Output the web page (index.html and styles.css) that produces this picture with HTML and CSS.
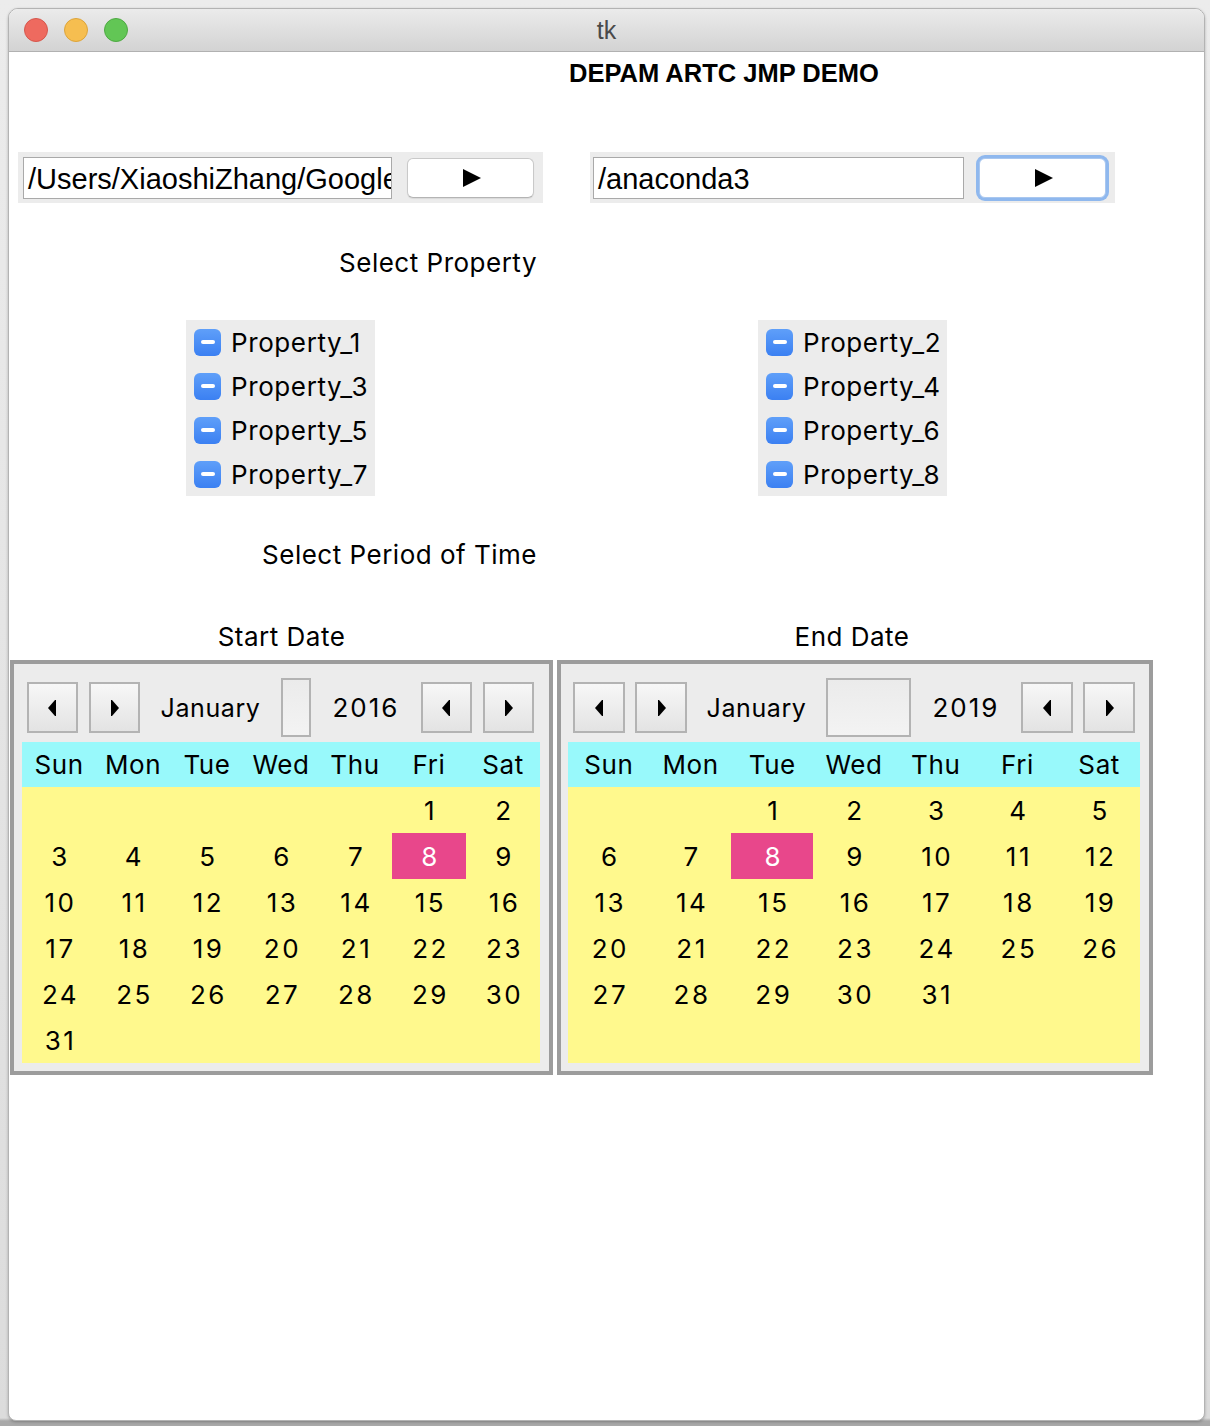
FILE: index.html
```html
<!DOCTYPE html>
<html>
<head>
<meta charset="utf-8">
<title>tk</title>
<link rel="stylesheet" href="styles.css">
</head>
<body>
<div class="desktop">
  <div class="window">
    <div class="titlebar">
      <div class="lights">
        <span class="light red"></span>
        <span class="light yellow"></span>
        <span class="light green"></span>
      </div>
      <div class="wtitle">tk</div>
      <div></div>
    </div>
    <div class="content">
      <div class="row title-row">
        <div></div>
        <div class="app-title">DEPAM ARTC JMP DEMO</div>
      </div>

      <div class="row entries-row">
        <div class="entry-frame left-frame">
          <div class="entry entry-left">/Users/XiaoshiZhang/Google Drive</div>
          <div class="play-btn"><svg width="18" height="18" viewBox="0 0 18 18"><polygon points="0,0 18,9 0,18" fill="#000"/></svg></div>
        </div>
        <div class="entry-frame right-frame">
          <div class="entry entry-right">/anaconda3</div>
          <div class="play-btn focused"><svg width="18" height="18" viewBox="0 0 18 18"><polygon points="0,0 18,9 0,18" fill="#000"/></svg></div>
        </div>
      </div>

      <div class="row label-row prop-label-row">
        <div class="label-right">Select Property</div>
        <div></div>
      </div>

      <div class="row checks-row">
        <div class="check-group group-left">
          <div class="check-item"><span class="cbox"><span class="dash"></span></span><span>Property_1</span></div>
          <div class="check-item"><span class="cbox"><span class="dash"></span></span><span>Property_3</span></div>
          <div class="check-item"><span class="cbox"><span class="dash"></span></span><span>Property_5</span></div>
          <div class="check-item"><span class="cbox"><span class="dash"></span></span><span>Property_7</span></div>
        </div>
        <div class="check-group group-right">
          <div class="check-item"><span class="cbox"><span class="dash"></span></span><span>Property_2</span></div>
          <div class="check-item"><span class="cbox"><span class="dash"></span></span><span>Property_4</span></div>
          <div class="check-item"><span class="cbox"><span class="dash"></span></span><span>Property_6</span></div>
          <div class="check-item"><span class="cbox"><span class="dash"></span></span><span>Property_8</span></div>
        </div>
      </div>

      <div class="row label-row period-label-row">
        <div class="label-right">Select Period of Time</div>
        <div></div>
      </div>

      <div class="row label-row dates-label-row">
        <div class="label-center">Start Date</div>
        <div class="label-center end-label">End Date</div>
      </div>

      <div class="row cal-row">
        <div class="calendar cal-left">
          <div class="cal-head">
            <div class="nav-btn"><svg width="9" height="18" viewBox="0 0 9 18"><polygon points="0,9 7,1 8,1 8,17 7,17" fill="#000"/></svg></div>
            <div class="nav-btn"><svg width="9" height="18" viewBox="0 0 9 18"><polygon points="9,9 2,1 1,1 1,17 2,17" fill="#000"/></svg></div>
            <div class="month-label">January</div>
            <div class="spacer-box"></div>
            <div class="year-label">2016</div>
            <div class="nav-btn"><svg width="9" height="18" viewBox="0 0 9 18"><polygon points="0,9 7,1 8,1 8,17 7,17" fill="#000"/></svg></div>
            <div class="nav-btn"><svg width="9" height="18" viewBox="0 0 9 18"><polygon points="9,9 2,1 1,1 1,17 2,17" fill="#000"/></svg></div>
          </div>
          <div class="day-names">
            <span>Sun</span><span>Mon</span><span>Tue</span><span>Wed</span><span>Thu</span><span>Fri</span><span>Sat</span>
          </div>
          <div class="days">
            <span></span><span></span><span></span><span></span><span></span><span>1</span><span>2</span>
            <span>3</span><span>4</span><span>5</span><span>6</span><span>7</span><span class="sel">8</span><span>9</span>
            <span>10</span><span>11</span><span>12</span><span>13</span><span>14</span><span>15</span><span>16</span>
            <span>17</span><span>18</span><span>19</span><span>20</span><span>21</span><span>22</span><span>23</span>
            <span>24</span><span>25</span><span>26</span><span>27</span><span>28</span><span>29</span><span>30</span>
            <span>31</span><span></span><span></span><span></span><span></span><span></span><span></span>
          </div>
        </div>

        <div class="calendar cal-right">
          <div class="cal-head">
            <div class="nav-btn"><svg width="9" height="18" viewBox="0 0 9 18"><polygon points="0,9 7,1 8,1 8,17 7,17" fill="#000"/></svg></div>
            <div class="nav-btn"><svg width="9" height="18" viewBox="0 0 9 18"><polygon points="9,9 2,1 1,1 1,17 2,17" fill="#000"/></svg></div>
            <div class="month-label">January</div>
            <div class="spacer-box"></div>
            <div class="year-label">2019</div>
            <div class="nav-btn"><svg width="9" height="18" viewBox="0 0 9 18"><polygon points="0,9 7,1 8,1 8,17 7,17" fill="#000"/></svg></div>
            <div class="nav-btn"><svg width="9" height="18" viewBox="0 0 9 18"><polygon points="9,9 2,1 1,1 1,17 2,17" fill="#000"/></svg></div>
          </div>
          <div class="day-names">
            <span>Sun</span><span>Mon</span><span>Tue</span><span>Wed</span><span>Thu</span><span>Fri</span><span>Sat</span>
          </div>
          <div class="days">
            <span></span><span></span><span>1</span><span>2</span><span>3</span><span>4</span><span>5</span>
            <span>6</span><span>7</span><span class="sel">8</span><span>9</span><span>10</span><span>11</span><span>12</span>
            <span>13</span><span>14</span><span>15</span><span>16</span><span>17</span><span>18</span><span>19</span>
            <span>20</span><span>21</span><span>22</span><span>23</span><span>24</span><span>25</span><span>26</span>
            <span>27</span><span>28</span><span>29</span><span>30</span><span>31</span><span></span><span></span>
            <span></span><span></span><span></span><span></span><span></span><span></span><span></span>
          </div>
        </div>
      </div>
    </div>
  </div>
</div>
</body>
</html>
```
FILE: styles.css
```css
html, body {
  margin: 0;
  padding: 0;
}
body {
  width: 1210px;
  height: 1426px;
  overflow: hidden;
  background: linear-gradient(to bottom, #ececec 0, #dcdcdc 1418px, #a9a9a9 1421px, #a9a9a9 100%);
  font-family: Inter, "Noto Sans", sans-serif;
  color: #000;
}
.desktop {
  padding: 8px 0 0 8px;
}
.window {
  box-sizing: border-box;
  width: 1197px;
  height: 1413px;
  border: 1px solid #b3b3b3;
  border-radius: 10px 10px 8px 8px;
  background: #fff;
  overflow: hidden;
  box-shadow: 0 1px 3px rgba(0,0,0,0.25);
}
.titlebar {
  box-sizing: border-box;
  height: 43px;
  border-bottom: 1px solid #b1b1b1;
  background: linear-gradient(to bottom, #ebebeb, #d3d3d3);
  display: grid;
  grid-template-columns: 1fr auto 1fr;
  align-items: center;
}
.lights {
  display: flex;
  gap: 16px;
  padding-left: 15px;
}
.light {
  box-sizing: border-box;
  width: 24px;
  height: 24px;
  border-radius: 50%;
  display: block;
}
.red { background: #ee6a5f; border: 1px solid #d5574d; }
.yellow { background: #f6be50; border: 1px solid #dca43b; }
.green { background: #62c655; border: 1px solid #4ea943; }
.wtitle {
  font-family: "Liberation Sans", Arial, sans-serif;
  font-size: 25px;
  color: #4a4a4a;
  line-height: 30px;
}

.content {
  padding-left: 1px;
}
.row {
  display: grid;
  grid-template-columns: 543px 596px;
  column-gap: 4px;
}
.title-row {
  padding-top: 6px;
}
.app-title {
  font-family: "Liberation Sans", Arial, sans-serif;
  font-weight: bold;
  font-size: 25.5px;
  line-height: 30px;
  padding-left: 12px;
}
.entries-row {
  margin-top: 64px;
}
.entry-frame {
  box-sizing: border-box;
  width: 525px;
  height: 51px;
  background: #ececec;
  display: flex;
  align-items: center;
  gap: 15px;
  padding-right: 9px;
}
.left-frame {
  margin-left: 8px;
  padding-left: 5px;
}
.right-frame {
  margin-left: 33px;
  padding-left: 3px;
}
.entry {
  box-sizing: border-box;
  height: 42px;
  border: 1px solid #a9a9a9;
  background: #fff;
  font-family: "Liberation Sans", Arial, sans-serif;
  font-size: 29px;
  line-height: 38px;
  padding-top: 2px;
  padding-left: 4px;
  white-space: nowrap;
  overflow: hidden;
}
.entry-left { width: 369px; }
.entry-right { width: 371px; }
.play-btn {
  box-sizing: border-box;
  width: 127px;
  height: 40px;
  background: #fff;
  border: 1px solid #c9c9c9;
  border-bottom-color: #b4b4b4;
  border-radius: 6px;
  display: flex;
  align-items: center;
  justify-content: center;
  box-shadow: 0 1px 1px rgba(0,0,0,0.08);
}
.play-btn svg {
  margin-left: 3px;
}
.play-btn.focused {
  border-color: #a9c7ef;
  box-shadow: 0 0 0 3px #8fb8ee;
}

.label-row {
  font-size: 26px;
  line-height: 30px;
  letter-spacing: 0.5px;
}
.prop-label-row { margin-top: 45px; }
.label-right {
  text-align: right;
  padding-right: 16px;
}
.label-center {
  text-align: center;
}
.end-label {
  padding-right: 6px;
}
.checks-row {
  margin-top: 42px;
}
.check-group {
  box-sizing: border-box;
  width: 189px;
  background: #ececec;
  padding-left: 8px;
}
.group-left { margin-left: 176px; }
.group-right { margin-left: 201px; }
.check-item {
  height: 44px;
  display: flex;
  align-items: center;
  gap: 10px;
  font-size: 26px;
  letter-spacing: 0.6px;
}
.cbox {
  box-sizing: border-box;
  width: 27px;
  height: 27px;
  border-radius: 6px;
  background: linear-gradient(to bottom, #5f9ff9, #3b80f2);
  display: flex;
  align-items: center;
  justify-content: center;
  flex: none;
}
.dash {
  width: 14px;
  height: 4px;
  border-radius: 2px;
  background: #fff;
  display: block;
}
.period-label-row { margin-top: 44px; }
.dates-label-row { margin-top: 52px; }

.cal-row {
  margin-top: 8px;
}
.calendar {
  box-sizing: border-box;
  height: 415px;
  border: 4px solid #9c9c9c;
  background: #ececec;
  padding-top: 14px;
}
.cal-left {
  padding-left: 8px;
  padding-right: 9px;
}
.cal-right {
  padding-left: 7px;
  padding-right: 9px;
}
.cal-head {
  height: 59px;
  display: flex;
  align-items: center;
  font-size: 25px;
  letter-spacing: 0.6px;
}
.cal-left .cal-head { padding-left: 5px; }
.cal-right .cal-head { padding-left: 5px; }
.nav-btn {
  box-sizing: border-box;
  width: 51px;
  height: 51px;
  border: 2px solid #b3b3b3;
  background: linear-gradient(to bottom, #f7f7f7, #e3e3e3);
  display: flex;
  align-items: center;
  justify-content: center;
  flex: none;
}
.nav-btn + .nav-btn {
  margin-left: 11px;
}
.cal-right .nav-btn {
  width: 52px;
  margin-left: 0;
}
.cal-right .nav-btn + .nav-btn {
  margin-left: 10px;
}
.month-label, .year-label {
  text-align: center;
  flex: none;
}
.year-label {
  font-size: 26px;
  letter-spacing: 2px;
}
.cal-left .month-label { width: 141px; }
.cal-left .year-label { width: 110px; }
.cal-right .month-label { width: 139px; }
.cal-right .year-label { width: 110px; }
.spacer-box {
  box-sizing: border-box;
  height: 59px;
  border: 2px solid #b3b3b3;
  background: linear-gradient(to bottom, #ebebeb, #f3f3f3);
  flex: none;
}
.cal-left .spacer-box { width: 30px; }
.cal-right .spacer-box { width: 85px; }

.day-names {
  margin-top: 5px;
  height: 45px;
  background: #98f9fb;
  display: grid;
  grid-template-columns: repeat(7, 1fr);
  align-items: center;
  text-align: center;
  font-size: 26px;
  letter-spacing: 0.6px;
}
.days {
  background: #fff98d;
  display: grid;
  grid-template-columns: repeat(7, 1fr);
  grid-auto-rows: 46px;
  font-size: 26px;
  letter-spacing: 2.5px;
}
.days span {
  display: flex;
  align-items: center;
  justify-content: center;
  padding-left: 3px;
}
.days span.sel {
  background: #e8478b;
  color: #fff;
}
```
